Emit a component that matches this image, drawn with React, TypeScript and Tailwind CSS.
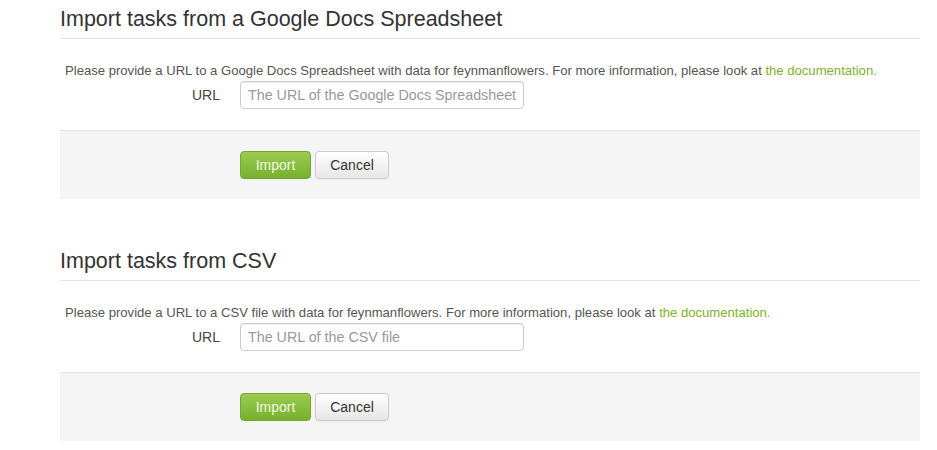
import React from 'react';

const sections = [
  {
    title: 'Import tasks from a Google Docs Spreadsheet',
    source: 'a Google Docs Spreadsheet',
    placeholder: 'The URL of the Google Docs Spreadsheet',
  },
  {
    title: 'Import tasks from CSV',
    source: 'a CSV file',
    placeholder: 'The URL of the CSV file',
  },
];

function ImportForm({ title, source, placeholder, first }: { title: string; source: string; placeholder: string; first: boolean }) {
  return (
    <form className={first ? '' : 'mt-[43px]'} onSubmit={(e) => e.preventDefault()}>
      <legend className="w-full h-[39px] border-b border-[#e5e5e5] text-[21.5px] leading-[38px] text-[#333]">
        {title}
      </legend>
      <p className="mt-[22px] pl-[5px] text-[13.1px] leading-5 text-[#555]">
        Please provide a URL to {source} with data for feynmanflowers. For more information, please look at{' '}
        <a href="#" className="text-[#7cb32b]">the documentation.</a>
      </p>
      <div className="flex items-center">
        <label className="w-[160px] text-right text-[14px] text-[#444]">URL</label>
        <input
          type="text"
          placeholder={placeholder}
          className="ml-[20px] w-[284px] h-[28px] rounded border border-[#ccc] px-[7px] text-[14.3px] text-[#555] placeholder:text-[#999] shadow-[inset_0_1px_1px_rgba(0,0,0,0.075)]"
        />
      </div>
      <div className="mt-[21px] border-t border-[#e5e5e5] bg-[#f5f5f5] pt-[20px] pb-[20px] pl-[180px] flex gap-[4px]">
        <button
          type="submit"
          className="h-[28px] w-[71px] rounded border border-[#75a62e] bg-gradient-to-b from-[#9bcb4f] to-[#78b02e] text-[14px] text-[#eef6e3]"
        >
          Import
        </button>
        <button
          type="button"
          className="h-[28px] w-[74px] rounded border border-[#ccc] bg-gradient-to-b from-white to-[#e6e6e6] text-[14px] text-[#333] shadow-[0_1px_2px_rgba(0,0,0,0.05)]"
        >
          Cancel
        </button>
      </div>
    </form>
  );
}

export default function App() {
  return (
    <div className="min-h-screen bg-white font-['Liberation_Sans',Arial,sans-serif]">
      <div className="ml-[60px] w-[860px]">
        {sections.map((s, i) => (
          <ImportForm key={s.title} {...s} first={i === 0} />
        ))}
      </div>
    </div>
  );
}
